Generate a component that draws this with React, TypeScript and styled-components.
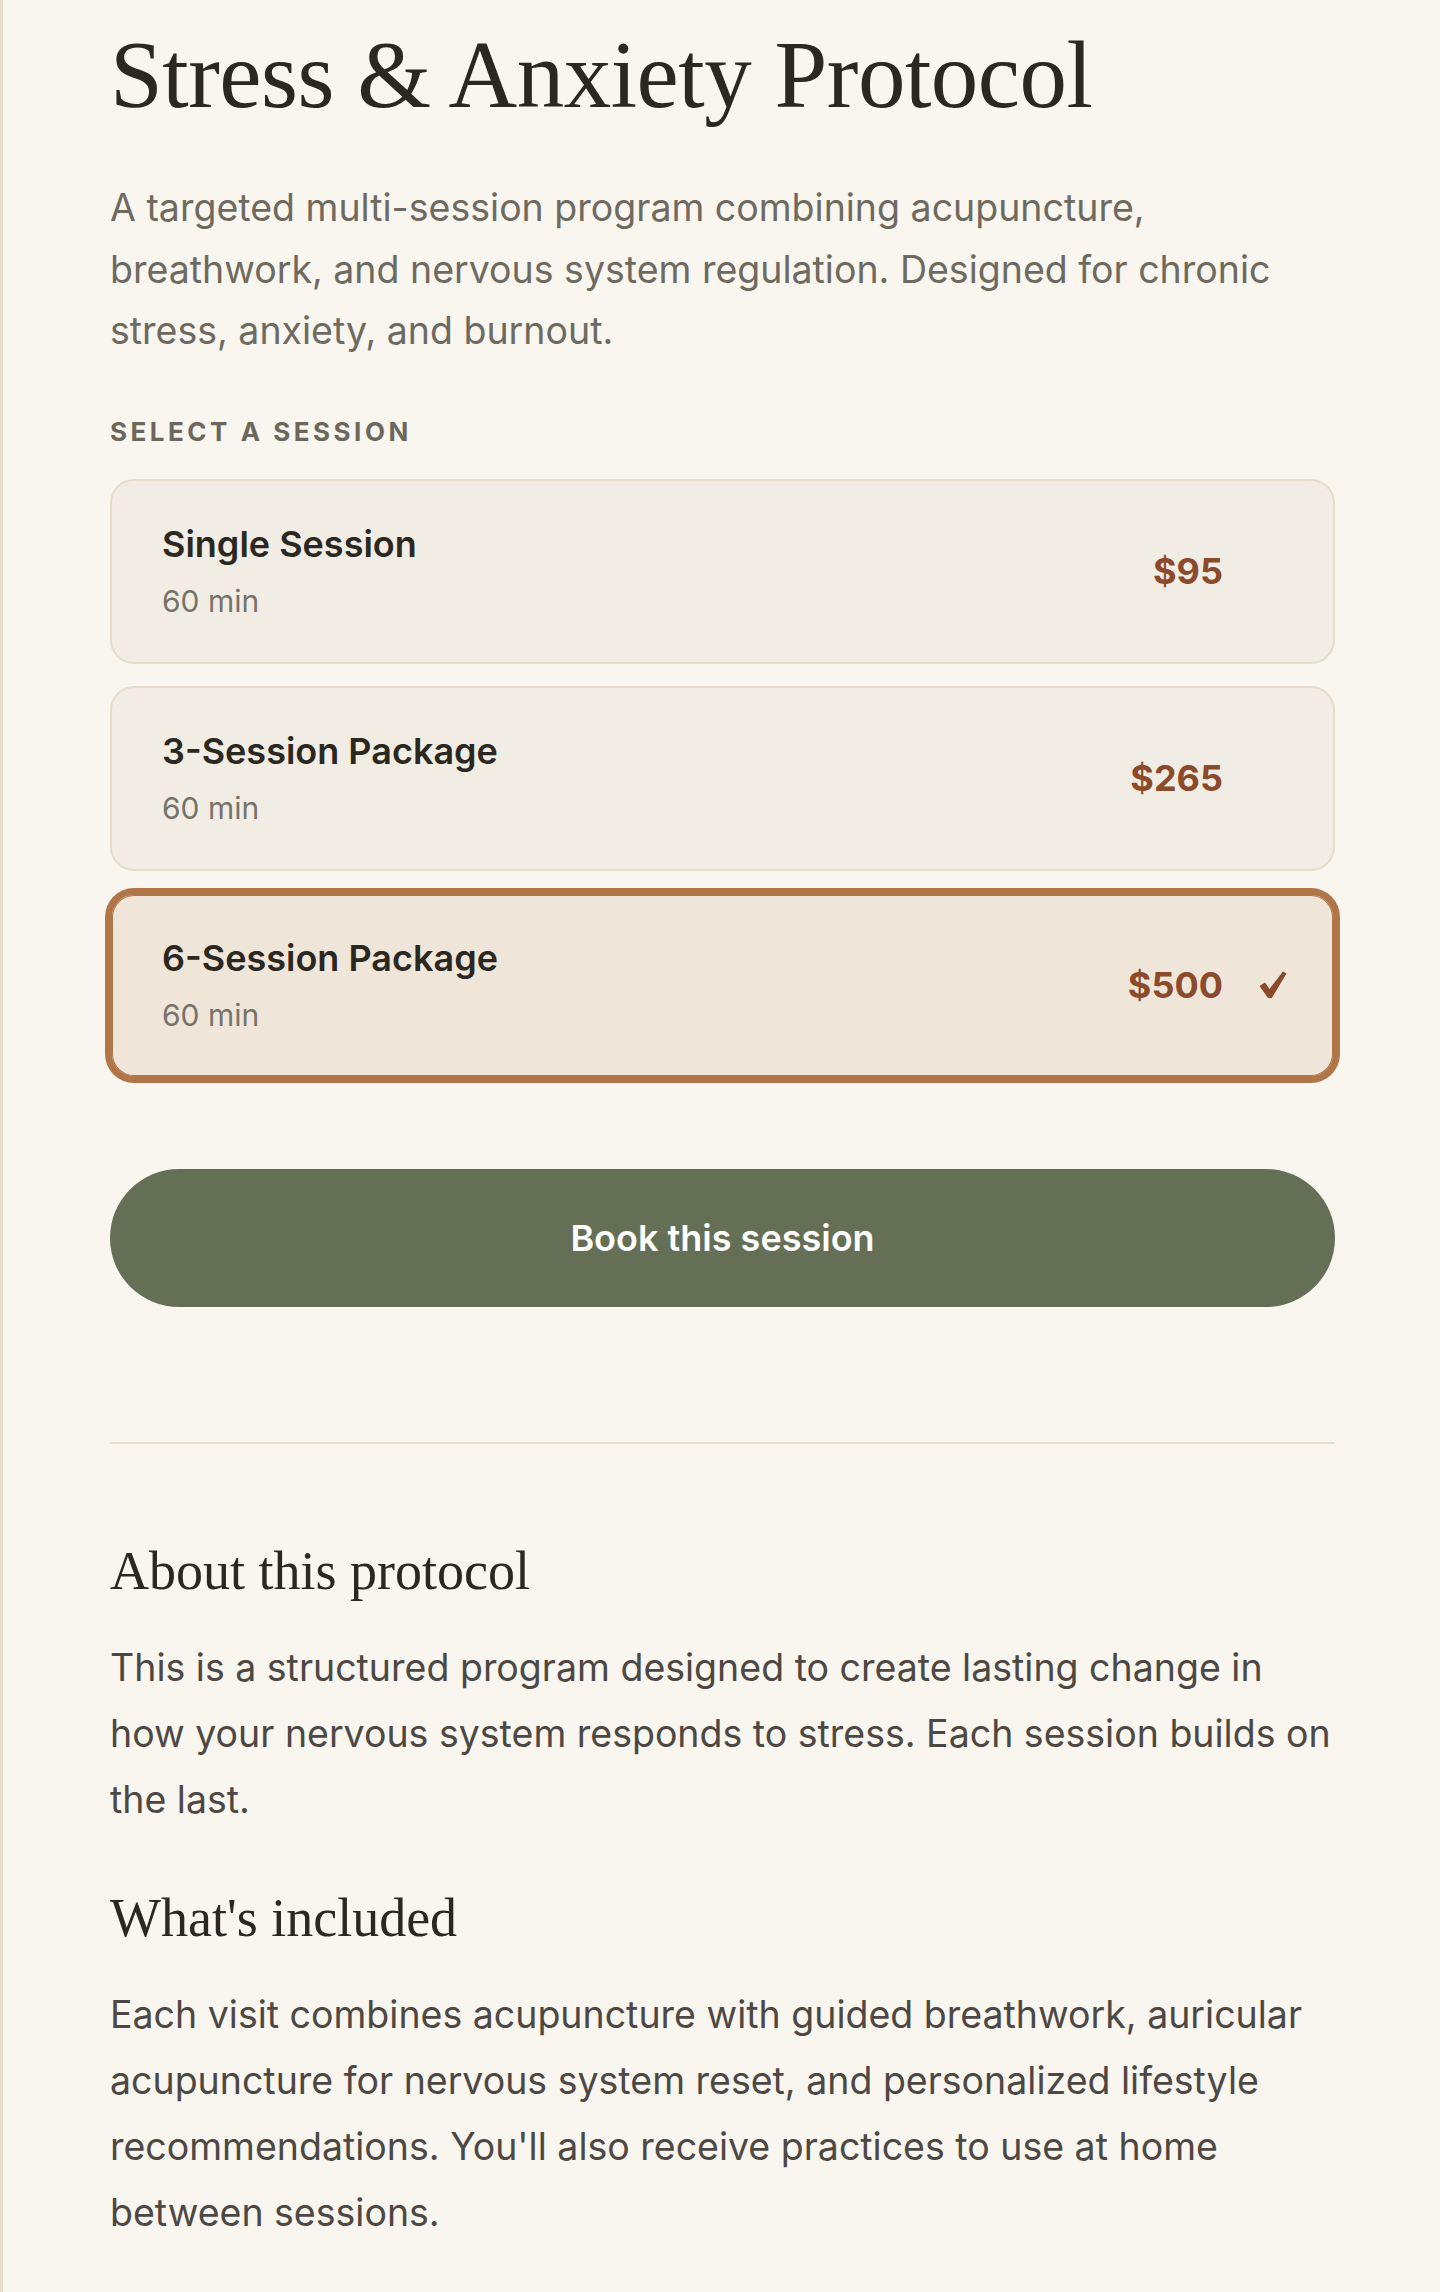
import React, { useState } from "react";
import styled, { createGlobalStyle, css } from "styled-components";

const GlobalStyle = createGlobalStyle`
  html, body { margin: 0; padding: 0; background: #f9f5ef; }
  * { box-sizing: border-box; }
`;

const sans = `Inter, "Open Sans", "Liberation Sans", sans-serif`;
const serif = `"Liberation Serif", "Times New Roman", serif`;

const Page = styled.div`
  min-height: 2292px;
  background: #f9f5ef;
  border-left: 3px solid #e8e0cc;
`;

const Content = styled.main`
  padding: 23px 105px 47px 107px;
  display: flex;
  flex-direction: column;
`;

const Title = styled.h1`
  margin: 0;
  font-family: ${serif};
  font-weight: 400;
  font-size: 95px;
  line-height: 105px;
  color: #2b2822;
  letter-spacing: -0.5px;
`;

const Lead = styled.p`
  margin: 49px 0 0;
  font-family: ${sans};
  font-size: 37.5px;
  line-height: 61.5px;
  color: #6e6a60;
`;

const Label = styled.div`
  margin-top: 54px;
  font-family: ${sans};
  font-size: 26px;
  line-height: 31px;
  font-weight: 700;
  letter-spacing: 0.135em;
  color: #6b675c;
`;

const Options = styled.div`
  margin-top: 32px;
  display: flex;
  flex-direction: column;
  gap: 22px;
`;

const Option = styled.button<{ $selected: boolean }>`
  all: unset;
  box-sizing: border-box;
  cursor: pointer;
  height: 185px;
  display: flex;
  align-items: center;
  justify-content: space-between;
  padding: 0 46px 0 50px;
  border-radius: 24px;
  border: 2px solid #e5dccb;
  background: #f2ede4;
  ${(p) =>
    p.$selected &&
    css`
      border-color: #b07549;
      background: #efe6d9;
      box-shadow: 0 0 0 5px #b07549, inset 0 0 0 1px #b07549;
    `}
`;

const OptionText = styled.div`
  display: flex;
  flex-direction: column;
  gap: 14px;
`;

const OptionName = styled.span`
  font-family: ${sans};
  font-size: 36px;
  line-height: 47px;
  font-weight: 600;
  color: #2b2822;
`;

const OptionMeta = styled.span`
  font-family: ${sans};
  font-size: 30px;
  line-height: 39px;
  color: #77736a;
`;

const PriceGroup = styled.div`
  display: flex;
  align-items: center;
`;

const Price = styled.span`
  font-family: ${sans};
  font-size: 36px;
  line-height: 47px;
  font-weight: 700;
  color: #8b4a2b;
`;

const CheckMark = styled.svg<{ $visible: boolean }>`
  width: 28px;
  height: 28px;
  margin-left: 36px;
  flex: none;
  visibility: ${(p) => (p.$visible ? "visible" : "hidden")};
`;

const BookButton = styled.button`
  all: unset;
  box-sizing: border-box;
  cursor: pointer;
  margin-top: 91px;
  height: 138px;
  border-radius: 69px;
  background: #646f56;
  color: #ffffff;
  display: flex;
  align-items: center;
  justify-content: center;
  font-family: ${sans};
  font-size: 36px;
  font-weight: 600;
`;

const Divider = styled.hr`
  margin: 135px 0 0;
  border: 0;
  height: 2px;
  background: #e6dfcf;
`;

const SectionHeading = styled.h2<{ $first?: boolean }>`
  margin: ${(p) => (p.$first ? "94px" : "52px")} 0 0;
  font-family: ${serif};
  font-weight: 400;
  font-size: 54px;
  line-height: 67px;
  color: #2b2822;
`;

const Body = styled.p`
  margin: 30px 0 0;
  font-family: ${sans};
  font-size: 37.5px;
  line-height: 66px;
  color: #4d4843;
`;

const sessions = [
  { name: "Single Session", meta: "60 min", price: "$95" },
  { name: "3-Session Package", meta: "60 min", price: "$265" },
  { name: "6-Session Package", meta: "60 min", price: "$500" },
];

export default function App() {
  const [selected, setSelected] = useState(2);
  return (
    <>
      <GlobalStyle />
      <Page>
        <Content>
          <Title>Stress &amp; Anxiety Protocol</Title>
          <Lead>
            A targeted multi-session program combining acupuncture, breathwork, and nervous
            system regulation. Designed for chronic stress, anxiety, and burnout.
          </Lead>
          <Label>SELECT A SESSION</Label>
          <Options>
            {sessions.map((s, i) => (
              <Option key={s.name} $selected={i === selected} onClick={() => setSelected(i)}>
                <OptionText>
                  <OptionName>{s.name}</OptionName>
                  <OptionMeta>{s.meta}</OptionMeta>
                </OptionText>
                <PriceGroup>
                  <Price>{s.price}</Price>
                  <CheckMark $visible={i === selected} viewBox="0 0 28 28" aria-hidden="true">
                    <path d="M0.5 15 L6 11.5 L10.5 18 L24 0.5 L27.5 2.5 L12.8 27 L9 27 Z" fill="#8b4a2b" />
                  </CheckMark>
                </PriceGroup>
              </Option>
            ))}
          </Options>
          <BookButton>Book this session</BookButton>
          <Divider />
          <SectionHeading $first>About this protocol</SectionHeading>
          <Body>
            This is a structured program designed to create lasting change in how your nervous
            system responds to stress. Each session builds on the last.
          </Body>
          <SectionHeading>What's included</SectionHeading>
          <Body>
            Each visit combines acupuncture with guided breathwork, auricular acupuncture for
            nervous system reset, and personalized lifestyle recommendations. You'll also receive
            practices to use at home between sessions.
          </Body>
        </Content>
      </Page>
    </>
  );
}
